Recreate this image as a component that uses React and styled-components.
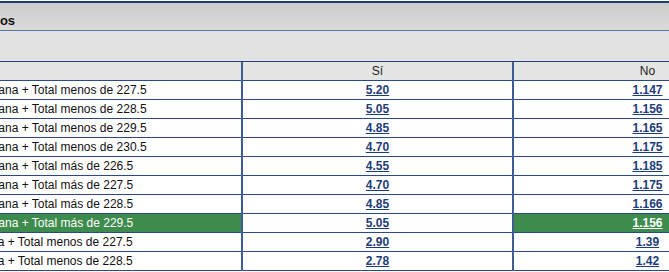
import React from "react";
import styled, { createGlobalStyle } from "styled-components";

const GlobalStyle = createGlobalStyle`
  html, body {
    margin: 0;
    padding: 0;
    background: #ffffff;
    overflow: hidden;
  }
  body {
    font-family: "Liberation Sans", Arial, sans-serif;
  }
`;

const Page = styled.div`
  width: 836px;
  margin-left: -55px;
  padding-top: 1px;
`;

const Panel = styled.div`
  border-top: 2px solid #1f3d78;
`;

const TitleBar = styled.div`
  height: 28px;
  box-sizing: border-box;
  padding: 10px 0 0 26px;
  background: linear-gradient(#cdcdcd, #dbdbdb);
  border-bottom: 1px solid #5874a8;
  font-size: 13px;
  font-weight: bold;
  color: #111;
`;

const SubBar = styled.div`
  height: 30px;
  background: #e2e2e2;
  border-bottom: 1px solid #23427c;
`;

const Table = styled.table`
  width: 100%;
  border-collapse: collapse;
  table-layout: fixed;
  font-size: 12px;
`;

const HeadCell = styled.th`
  height: 18px;
  padding: 0 4px;
  background: #e5e5e5;
  font-weight: normal;
  color: #222;
  text-align: ${(p) => (p.$left ? "left" : "center")};
  border-bottom: 1px solid #2a4a85;
  border-left: ${(p) => (p.$left ? "none" : "2px solid #3d5d96")};
`;

const Row = styled.tr`
  background: ${(p) => (p.$active ? "#3e8b4e" : "#ffffff")};
  color: ${(p) => (p.$active ? "#ffffff" : "#111111")};
`;

const Cell = styled.td`
  height: 18px;
  padding: 0 4px;
  white-space: nowrap;
  overflow: hidden;
  text-align: ${(p) => (p.$left ? "left" : "center")};
  border-bottom: 1px solid #2a4a85;
  border-left: ${(p) => (p.$left ? "none" : "2px solid #3d5d96")};
  background: ${(p) => (p.$plain ? "#ffffff" : "transparent")};
`;

const Odd = styled.a`
  font-weight: bold;
  text-decoration: underline;
  color: ${(p) => (p.$active ? "#ffffff" : "#1d3c78")};
  cursor: pointer;
`;

const rows = [
  { name: "Pistons gana + Total menos de 227.5", si: "5.20", no: "1.147" },
  { name: "Pistons gana + Total menos de 228.5", si: "5.05", no: "1.156" },
  { name: "Pistons gana + Total menos de 229.5", si: "4.85", no: "1.165" },
  { name: "Pistons gana + Total menos de 230.5", si: "4.70", no: "1.175" },
  { name: "Pistons gana + Total más de 226.5", si: "4.55", no: "1.185" },
  { name: "Pistons gana + Total más de 227.5", si: "4.70", no: "1.175" },
  { name: "Pistons gana + Total más de 228.5", si: "4.85", no: "1.166" },
  { name: "Pistons gana + Total más de 229.5", si: "5.05", no: "1.156", active: true },
  { name: "Heat gana + Total menos de 227.5", si: "2.90", no: "1.39" },
  { name: "Heat gana + Total menos de 228.5", si: "2.78", no: "1.42" },
];

export default function App() {
  return (
    <Page>
      <GlobalStyle />
      <Panel>
        <TitleBar>Puntos</TitleBar>
        <SubBar />
        <Table>
          <colgroup>
            <col style={{ width: "297px" }} />
            <col style={{ width: "271px" }} />
            <col style={{ width: "268px" }} />
          </colgroup>
          <thead>
            <tr>
              <HeadCell $left />
              <HeadCell>Sí</HeadCell>
              <HeadCell>No</HeadCell>
            </tr>
          </thead>
          <tbody>
            {rows.map((r) => (
              <Row key={r.name} $active={r.active}>
                <Cell $left>{r.name}</Cell>
                <Cell $plain>
                  <Odd>{r.si}</Odd>
                </Cell>
                <Cell>
                  <Odd $active={r.active}>{r.no}</Odd>
                </Cell>
              </Row>
            ))}
          </tbody>
        </Table>
      </Panel>
    </Page>
  );
}
